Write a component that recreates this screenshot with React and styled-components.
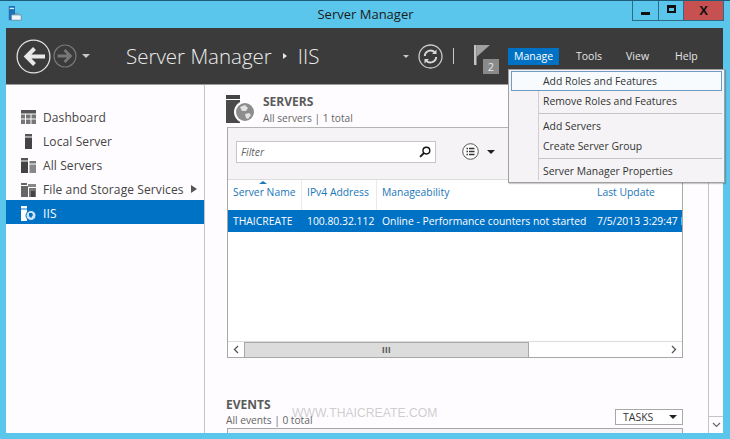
import React from 'react';
import styled, { createGlobalStyle } from 'styled-components';

const GlobalStyle = createGlobalStyle`
  html, body {
    margin: 0;
    padding: 0;
    overflow: hidden;
  }
  body {
    font-family: "Open Sans", "Noto Sans", sans-serif;
    font-size: 12px;
    color: #444;
  }
`;

//Icons
const AppIcon = () => (
  <svg width="16" height="16" viewBox="0 0 16 18">
    <rect x="1" y="0" width="7" height="16" fill="#1f6fb5" />
    <rect x="2" y="2" width="5" height="1.5" fill="#d8ecf8" />
    <path d="M4 16V10h11v6z" fill="#eef6fb" stroke="#6a8fa8" />
    <path d="M7 10l2-2h2l2 2" fill="none" stroke="#6a8fa8" />
  </svg>
);

const BackIcon = () => (
  <svg width="35" height="35" viewBox="0 0 35 35">
    <circle cx="17.5" cy="17.5" r="16.4" fill="none" stroke="#e0e0e0" strokeWidth="1.3" />
    <path d="M29 17.500H11M18.500 9.500l-8 8 8 8" fill="none" stroke="#e8e8e8" strokeWidth="4" />
  </svg>
);

const ForwardIcon = () => (
  <svg width="24" height="24" viewBox="0 0 24 24">
    <circle cx="12" cy="12" r="11" fill="none" stroke="#777" strokeWidth="1.200" />
    <path d="M4.500 12h12.500M11.500 6l6 6-6 6" fill="none" stroke="#777" strokeWidth="2.800" />
  </svg>
);

const RefreshIcon = () => (
  <svg width="25" height="25" viewBox="0 0 25 25">
    <circle cx="12.500" cy="12.500" r="11.500" fill="none" stroke="#c9c9c9" strokeWidth="1.300" />
    <path d="M6.800 12a5.800 5.800 0 0 1 10-3.600M18.200 13a5.800 5.800 0 0 1-10 3.600" fill="none" stroke="#d8d8d8" strokeWidth="2" />
    <path d="M18.500 5.500v4.500h-4.500zM6.500 19.500v-4.500h4.500z" fill="#d8d8d8" />
  </svg>
);

const FlagIcon = () => (
  <svg width="16" height="20" viewBox="0 0 16 20">
    <rect x="0" y="0" width="2.500" height="20" fill="#c4c4c4" />
    <path d="M2.500 0H16L2.500 12z" fill="#a0a0a0" />
  </svg>
);

const DashboardIcon = () => (
  <svg width="15" height="15" viewBox="0 0 15 15">
    <rect width="15" height="3.500" fill="#555" />
    <path d="M0 4.500h4v4H0zM5 4.500h4.500v4H5zM10.500 4.500H15v4h-4.500zM0 9.500h4V14H0zM5 9.500h4.500V14H5zM10.500 9.500H15V14h-4.500z" fill="#777" />
  </svg>
);

const LocalServerIcon = () => (
  <svg width="15" height="15" viewBox="0 0 15 15">
    <rect x="4" y="0" width="7" height="2.500" fill="#555" />
    <rect x="4" y="3.500" width="7" height="11.500" fill="#444" />
  </svg>
);

const AllServersIcon = () => (
  <svg width="15" height="15" viewBox="0 0 15 15">
    <rect x="0" y="0" width="7" height="2.500" fill="#555" />
    <rect x="0" y="3.500" width="7" height="11.500" fill="#444" />
    <rect x="8.500" y="3" width="6.500" height="2.500" fill="#777" />
    <rect x="8.500" y="6.500" width="6.500" height="8.500" fill="#888" />
  </svg>
);

const StorageIcon = () => (
  <svg width="15" height="15" viewBox="0 0 15 15">
    <path d="M0 1h6v2H0zM0 4h7v11H0z" fill="#666" />
    <path d="M7 2h8v3H7z" fill="#888" />
    <path d="M8 6h7v9H8z" fill="#777" />
    <path d="M10 9h4v6h-4z" fill="#444" />
  </svg>
);

const IisIcon = () => (
  <svg width="15" height="15" viewBox="0 0 15 15">
    <path d="M0 0h6v2.500H0zM0 3.500h6V15H0z" fill="#fff" />
    <circle cx="10" cy="9.500" r="5" fill="#cfe4f4" stroke="#0072c6" />
    <path d="M8 7l3 0 1 2-2 3-2-2z" fill="#0072c6" />
  </svg>
);

const ServersIcon = () => (
  <svg width="30" height="28" viewBox="0 0 30 28">
    <rect x="0" y="0" width="14" height="4" fill="#444" />
    <rect x="0" y="5" width="14" height="23" fill="#4a4a4a" />
    <circle cx="19" cy="17" r="11" fill="#fff" />
    <circle cx="19" cy="17" r="9" fill="#8d8d8d" />
    <path d="M14 12l5-2 3 3-2 3-4 0zM19 19l4-1 2 2-3 4-2-1z" fill="#e2e2e2" />
  </svg>
);

const SearchIcon = () => (
  <svg width="12" height="12" viewBox="0 0 13 13">
    <circle cx="8" cy="5" r="3.700" fill="none" stroke="#111" strokeWidth="1.500" />
    <path d="M5.500 7.500L1.200 11.800" stroke="#111" strokeWidth="2" />
  </svg>
);

const ListIcon = () => (
  <svg width="17" height="17" viewBox="0 0 17 17">
    <circle cx="8.500" cy="8.500" r="7.800" fill="#fff" stroke="#555" />
    <path d="M4.500 5.500h1.500M7 5.500h5.500M4.500 8.500h1.500M7 8.500h5.500M4.500 11.500h1.500M7 11.500h5.500" stroke="#333" strokeWidth="1.400" />
  </svg>
);

//Title bar
const Window = styled.div`
  width: 730px;
  height: 439px;
  box-sizing: border-box;
  position: relative;
  display: flex;
  flex-direction: column;
  background: #5bc6ec;
  border-top: 1px solid #1c5c78;
  overflow: hidden;
`;

const TitleBar = styled.div`
  height: 27px;
  flex: none;
  display: grid;
  grid-template-columns: 1fr auto 1fr;
  align-items: start;
  padding: 0 6px 0 7px;
`;

const AppIconSlot = styled.div`
  padding-top: 5px;
`;

const Title = styled.div`
  font-size: 13px;
  color: #1b1b1b;
  line-height: 27px;
`;

const WindowButtons = styled.div`
  justify-self: end;
  display: flex;
  height: 19px;
  border: 1px solid #2c6c88;
  border-top: 0;
`;

const WindowButton = styled.div`
  width: ${(p) => p.$w}px;
  display: flex;
  align-items: center;
  justify-content: center;
  background: ${(p) => (p.$close ? '#c75050' : 'transparent')};
  border-left: ${(p) => (p.$divide ? '1px solid #2c6c88' : '0')};
  font: bold 13px "Liberation Sans", sans-serif;
  color: #111;
`;

const MinGlyph = styled.span`
  width: 9px;
  height: 3px;
  margin-top: 5px;
  background: #111;
`;

const MaxGlyph = styled.span`
  width: 5px;
  height: 3px;
  margin-top: -3px;
  border: 2px solid #111;
  border-top-width: 3px;
`;

//Frame
const Frame = styled.div`
  flex: 1;
  min-height: 0;
  margin: 0 7px 6px 6px;
  display: flex;
  flex-direction: column;
  background: #fefcfe;
`;

const Header = styled.header`
  height: 57px;
  flex: none;
  display: flex;
  align-items: center;
  background: #3b3b3b;
  border-bottom: 1px solid #9c9c9c;
  box-sizing: border-box;
  padding: 0 0 0 10px;
  color: #e4e4e4;
`;

const NavButtons = styled.div`
  display: flex;
  align-items: center;
  gap: 2px;
`;

const SmallCaret = styled.span`
  width: 0;
  height: 0;
  margin-left: ${(p) => p.$gap || 0}px;
  margin-right: ${(p) => p.$after || 0}px;
  border-left: ${(p) => p.$size}px solid transparent;
  border-right: ${(p) => p.$size}px solid transparent;
  border-top: ${(p) => p.$size}px solid ${(p) => p.$color || '#c8c8c8'};
`;

const Breadcrumb = styled.div`
  margin-left: 36px;
  width: 277px;
  font-size: 20.500px;
  font-weight: 300;
  color: #ececec;
  display: flex;
  align-items: center;
  white-space: nowrap;
`;

const CrumbArrow = styled.span`
  width: 0;
  height: 0;
  margin: 0 11px;
  border-top: 3.500px solid transparent;
  border-bottom: 3.500px solid transparent;
  border-left: 4px solid #e8e8e8;
`;

const HeaderTools = styled.div`
  display: flex;
  align-items: center;
`;

const Pipe = styled.span`
  width: 1px;
  height: 16px;
  margin: 0 20px 0 10px;
  background: #c9c9c9;
`;

const Flag = styled.div`
  position: relative;
  width: 25px;
  height: 29px;
  margin-top: 7px;
  margin-right: 9px;
`;

const FlagBadge = styled.span`
  position: absolute;
  right: 0;
  bottom: 0;
  width: 16px;
  height: 15px;
  background: #8a8a8a;
  color: #e8e8e8;
  font-size: 11px;
  line-height: 15px;
  text-align: center;
`;

const Menus = styled.nav`
  display: flex;
  align-items: center;
  margin-top: 1px;
  height: 17px;
`;

const MenuItem = styled.span`
  padding: 0 5px 0 6px;
  margin-right: ${(p) => p.$after}px;
  min-width: ${(p) => (p.$active ? '40px' : '0')};
  line-height: 17px;
  font-size: 10.500px;
  color: ${(p) => (p.$active ? '#fff' : '#e6e6e6')};
  background: ${(p) => (p.$active ? '#0072c6' : 'transparent')};
`;

//Body
const Body = styled.div`
  flex: 1;
  min-height: 0;
  display: flex;
`;

const Sidebar = styled.aside`
  width: 199px;
  flex: none;
  box-sizing: border-box;
  padding-top: 19px;
  border-right: 1px solid #c4c4c4;
`;

const NavRow = styled.div`
  height: 24px;
  box-sizing: border-box;
  padding: 2px 7px 0 15px;
  display: flex;
  align-items: center;
  gap: 7px;
  font-size: 12px;
  letter-spacing: 0.1px;
  color: ${(p) => (p.$active ? '#fff' : '#444')};
  background: ${(p) => (p.$active ? '#0072c6' : 'transparent')};
  span {
    flex: 1;
    white-space: nowrap;
  }
`;

const NavArrow = styled.i`
  width: 0;
  height: 0;
  border-top: 4px solid transparent;
  border-bottom: 4px solid transparent;
  border-left: 6px solid #555;
`;

const Main = styled.main`
  flex: 1;
  min-width: 0;
  box-sizing: border-box;
  padding: 10px 25px 0 21px;
  overflow: hidden;
`;

const SectionHead = styled.div`
  display: flex;
  gap: 7px;
  height: 32px;
`;

const SectionTitle = styled.div`
  font-size: 12px;
  font-weight: 700;
  line-height: 14px;
  color: #5a5a5a;
`;

const SectionSub = styled.div`
  margin-top: ${(p) => p.$gap}px;
  font-size: 10.200px;
  line-height: 15px;
  color: #666;
`;

const Panel = styled.section`
  box-sizing: border-box;
  height: 231px;
  margin-left: 1px;
  display: flex;
  flex-direction: column;
  border: 1px solid #a8a8a8;
  border-top-color: #b4b4b4;
  background: #fff;
`;

const Toolbar = styled.div`
  height: 52px;
  flex: none;
  box-sizing: border-box;
  display: flex;
  align-items: flex-start;
  padding: 13px 0 0 8px;
  background: #f5f3f5;
  border-bottom: 1px solid #dcdcdc;
`;

const FilterBox = styled.div`
  width: 200px;
  height: 22px;
  box-sizing: border-box;
  display: flex;
  align-items: center;
  justify-content: space-between;
  padding: 0 4px 0 4px;
  background: #fff;
  border: 1px solid #c6c6c6;
  font-size: 10.500px;
  font-style: italic;
  color: #666;
`;

const ListButton = styled.div`
  margin-left: 26px;
  margin-top: 2px;
  display: flex;
  align-items: center;
  gap: 8px;
`;

const Row = styled.div`
  flex: none;
  height: ${(p) => p.$h}px;
  display: grid;
  grid-template-columns: 74px 75px 215px 1fr;
  align-items: center;
  font-size: 10.350px;
  white-space: nowrap;
  overflow: hidden;
  color: ${(p) => (p.$selected ? '#fff' : '#1976b8')};
  background: ${(p) => (p.$selected ? '#0072c6' : 'transparent')};
`;

const Cell = styled.div`
  position: relative;
  height: 100%;
  box-sizing: border-box;
  display: flex;
  align-items: center;
  padding: 0 0 ${(p) => p.$drop || 0}px 5px;
  overflow: hidden;
  border-right: ${(p) => (p.$line ? '1px solid #eaeaea' : '0')};
`;

const SortMark = styled.i`
  position: absolute;
  left: 31px;
  top: 1px;
  width: 0;
  height: 0;
  border-left: 4px solid transparent;
  border-right: 4px solid transparent;
  border-bottom: 3px solid #1976b8;
`;

const HScroll = styled.div`
  margin-top: auto;
  flex: none;
  height: 15px;
  display: flex;
  align-items: stretch;
  border-top: 1px solid #dcdcdc;
  background: #fff;
`;

const ScrollEnd = styled.div`
  width: 16px;
  display: flex;
  align-items: center;
  justify-content: center;
`;

const Thumb = styled.div`
  width: 283px;
  display: flex;
  align-items: center;
  justify-content: center;
  background: #dcdcdc;
  border: 1px solid #a8a8a8;
  border-bottom: 0;
  font: bold 9px "Liberation Sans", sans-serif;
  letter-spacing: 0.5px;
  color: #555;
`;

const ScrollTrack = styled.div`
  flex: 1;
`;

const EventsHead = styled.div`
  margin-top: 37px;
  display: flex;
  justify-content: space-between;
  align-items: flex-end;
  height: 33px;
`;

const TasksButton = styled.div`
  width: 68px;
  height: 16px;
  box-sizing: border-box;
  margin-bottom: 3px;
  display: flex;
  align-items: center;
  justify-content: space-between;
  padding: 0 5px 0 7px;
  border: 1px solid #a8a8a8;
  background: #fff;
  font-size: 10.500px;
  color: #333;
`;

const EventsPanel = styled.div`
  height: 20px;
  margin-left: 1px;
  border: 1px solid #a8a8a8;
  border-bottom: 0;
  background: #f5f3f5;
`;

const VScroll = styled.div`
  width: 15px;
  flex: none;
  box-sizing: border-box;
  display: flex;
  flex-direction: column;
  justify-content: flex-end;
  border-left: 1px solid #c4c4c4;
`;

const VScrollEnd = styled.div`
  height: 16px;
  display: flex;
  align-items: center;
  justify-content: center;
  border-top: 1px solid #c4c4c4;
`;

//Overlays
const Dropdown = styled.div`
  position: absolute;
  left: 508px;
  top: 68px;
  width: 217px;
  height: 114px;
  box-sizing: border-box;
  padding: 1px 2px 0 2px;
  background: #f5f3f5;
  border: 1px solid #a0a0a0;
  box-shadow: 1px 1px 1px rgba(0, 0, 0, 0.2);
  font-size: 10.400px;
  color: #333;
`;

const Gutter = styled.i`
  position: absolute;
  left: 29px;
  top: 2px;
  bottom: 2px;
  width: 1px;
  background: #cfcfcf;
`;

const DropItem = styled.div`
  position: relative;
  box-sizing: border-box;
  height: 20px;
  line-height: 18px;
  padding-left: 31px;
  white-space: nowrap;
  background: ${(p) => (p.$hover ? '#f8fbfd' : 'transparent')};
  border: 1px solid ${(p) => (p.$hover ? '#6f9cc0' : 'transparent')};
`;

const DropRule = styled.div`
  height: 1px;
  margin: 2px 0 2px 28px;
  background: #c4c4c4;
`;

const Watermark = styled.div`
  position: absolute;
  left: 292px;
  top: 405px;
  font-family: "Liberation Sans", sans-serif;
  font-size: 12.200px;
  color: rgba(130, 130, 130, 0.4);
  white-space: nowrap;
`;

const navItems = [
  { label: 'Dashboard', icon: <DashboardIcon /> },
  { label: 'Local Server', icon: <LocalServerIcon /> },
  { label: 'All Servers', icon: <AllServersIcon /> },
  { label: 'File and Storage Services', icon: <StorageIcon />, more: true },
  { label: 'IIS', icon: <IisIcon />, active: true },
];

const App = () => {
  return (
    <>
      <GlobalStyle />
      <Window>
        <TitleBar>
          <AppIconSlot>
            <AppIcon />
          </AppIconSlot>
          <Title>Server Manager</Title>
          <WindowButtons>
            <WindowButton $w={25}>
              <MinGlyph />
            </WindowButton>
            <WindowButton $w={24} $divide>
              <MaxGlyph />
            </WindowButton>
            <WindowButton $w={39} $divide $close>
              X
            </WindowButton>
          </WindowButtons>
        </TitleBar>
        <Frame>
          <Header>
            <NavButtons>
              <BackIcon />
              <ForwardIcon />
              <SmallCaret $size={4.5} $gap={3} />
            </NavButtons>
            <Breadcrumb>
              Server Manager
              <CrumbArrow />
              IIS
            </Breadcrumb>
            <HeaderTools>
              <SmallCaret $size={3} $after={9} />
              <RefreshIcon />
              <Pipe />
              <Flag>
                <FlagIcon />
                <FlagBadge>2</FlagBadge>
              </Flag>
            </HeaderTools>
            <Menus>
              <MenuItem $active $after={11}>Manage</MenuItem>
              <MenuItem $after={13}>Tools</MenuItem>
              <MenuItem $after={15}>View</MenuItem>
              <MenuItem $after={0}>Help</MenuItem>
            </Menus>
          </Header>
          <Body>
            <Sidebar>
              {navItems.map((item) => (
                <NavRow key={item.label} $active={item.active}>
                  {item.icon}
                  <span>{item.label}</span>
                  {item.more && <NavArrow />}
                </NavRow>
              ))}
            </Sidebar>
            <Main>
              <SectionHead>
                <ServersIcon />
                <div>
                  <SectionTitle>SERVERS</SectionTitle>
                  <SectionSub $gap={2}>All servers | 1 total</SectionSub>
                </div>
              </SectionHead>
              <Panel>
                <Toolbar>
                  <FilterBox>
                    Filter
                    <SearchIcon />
                  </FilterBox>
                  <ListButton>
                    <ListIcon />
                    <SmallCaret $size={4.5} $color="#222" />
                  </ListButton>
                </Toolbar>
                <Row $h={30}>
                  <Cell $line $drop={6}>
                    <SortMark />
                    Server Name
                  </Cell>
                  <Cell $line $drop={6}>IPv4 Address</Cell>
                  <Cell $drop={6}>Manageability</Cell>
                  <Cell $drop={6}>Last Update</Cell>
                </Row>
                <Row $h={22} $selected>
                  <Cell>THAICREATE</Cell>
                  <Cell>100.80.32.112</Cell>
                  <Cell>Online - Performance counters not started</Cell>
                  <Cell>7/5/2013 3:29:47 PM</Cell>
                </Row>
                <HScroll>
                  <ScrollEnd>
                    <svg width="6" height="9" viewBox="0 0 6 9">
                      <path d="M5 1L1.500 4.500 5 8" fill="none" stroke="#555" strokeWidth="1.300" />
                    </svg>
                  </ScrollEnd>
                  <Thumb>III</Thumb>
                  <ScrollTrack />
                  <ScrollEnd>
                    <svg width="6" height="9" viewBox="0 0 6 9">
                      <path d="M1 1l3.500 3.500L1 8" fill="none" stroke="#555" strokeWidth="1.300" />
                    </svg>
                  </ScrollEnd>
                </HScroll>
              </Panel>
              <EventsHead>
                <div>
                  <SectionTitle>EVENTS</SectionTitle>
                  <SectionSub $gap={1}>All events | 0 total</SectionSub>
                </div>
                <TasksButton>
                  TASKS
                  <SmallCaret $size={4} $color="#222" />
                </TasksButton>
              </EventsHead>
              <EventsPanel />
            </Main>
            <VScroll>
              <VScrollEnd>
                <svg width="9" height="6" viewBox="0 0 9 6">
                  <path d="M1 1l3.500 3.500L8 1" fill="none" stroke="#666" strokeWidth="1.200" />
                </svg>
              </VScrollEnd>
            </VScroll>
          </Body>
        </Frame>
        <Dropdown>
          <Gutter />
          <DropItem $hover>Add Roles and Features</DropItem>
          <DropItem>Remove Roles and Features</DropItem>
          <DropRule />
          <DropItem>Add Servers</DropItem>
          <DropItem>Create Server Group</DropItem>
          <DropRule />
          <DropItem>Server Manager Properties</DropItem>
        </Dropdown>
        <Watermark>WWW.THAICREATE.COM</Watermark>
      </Window>
    </>
  );
};

export default App;
